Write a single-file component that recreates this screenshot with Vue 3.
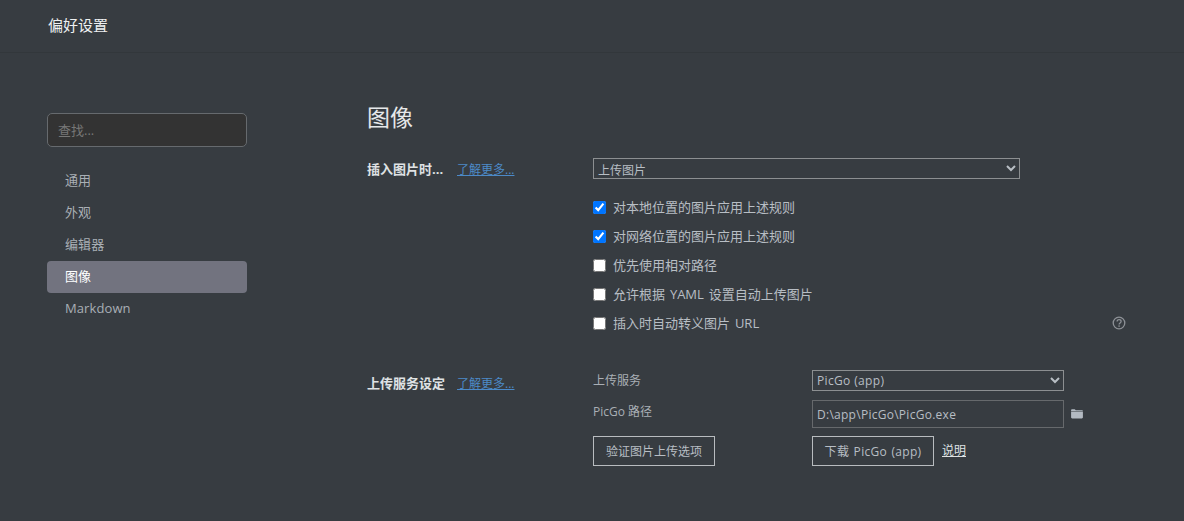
<script setup>
const navItems = [
  { label: '通用' },
  { label: '外观' },
  { label: '编辑器' },
  { label: '图像', active: true },
  { label: 'Markdown' },
]
const options = [
  { label: '对本地位置的图片应用上述规则', checked: true },
  { label: '对网络位置的图片应用上述规则', checked: true },
  { label: '优先使用相对路径', checked: false },
  { label: '允许根据 YAML 设置自动上传图片', checked: false },
  { label: '插入时自动转义图片 URL', checked: false, help: true },
]
</script>

<template>
  <div class="page">
    <header class="header">偏好设置</header>
    <div class="body">
      <aside class="sidebar">
        <input class="search" type="text" placeholder="查找..." />
        <nav class="nav">
          <div v-for="item in navItems" :key="item.label" class="nav-item" :class="{ active: item.active }">{{ item.label }}</div>
        </nav>
      </aside>
      <main class="main">
        <h1 class="title">图像</h1>
        <section class="section first">
          <div class="label-col">
            <span class="label">插入图片时...</span>
            <a class="more">了解更多...</a>
          </div>
          <div class="content">
            <select class="select wide"><option>上传图片</option></select>
            <div class="checks">
              <label v-for="o in options" :key="o.label" class="check">
                <input type="checkbox" :checked="o.checked" />
                <span class="check-text">{{ o.label }}</span>
                <svg v-if="o.help" class="help" viewBox="0 0 14 14" width="14" height="14">
                  <circle cx="7" cy="7" r="5.8" fill="none" stroke="#8d9196" stroke-width="1.3" />
                  <path d="M5.1 5.6c0-1.2.9-1.9 2-1.9s2 .7 2 1.7c0 1.5-2 1.5-2 3" fill="none" stroke="#8d9196" stroke-width="1.3" />
                  <rect x="6.4" y="9.4" width="1.4" height="1.4" fill="#8d9196" />
                </svg>
              </label>
            </div>
          </div>
        </section>
        <section class="section second">
          <div class="label-col">
            <span class="label">上传服务设定</span>
            <a class="more">了解更多...</a>
          </div>
          <div class="service">
            <div class="svc-label row-a">上传服务</div>
            <select class="select narrow"><option>PicGo (app)</option></select>
            <div class="svc-label row-b">PicGo 路径</div>
            <div class="path-row">
              <input class="path" type="text" value="D:\app\PicGo\PicGo.exe" />
              <svg class="folder" viewBox="0 0 13 11" width="12" height="10">
                <path d="M0 1.2C0 .6.4.2 1 .2h3l1.2 1.1h6.6c.7 0 1.2.3 1.2 1v.4H0z" fill="#b3bac2" />
                <path d="M0 3.4h13v5.8c0 .8-.5 1.3-1.2 1.3H1.2C.5 10.5 0 10 0 9.2z" fill="#b3bac2" />
              </svg>
            </div>
            <div><button class="btn first-btn">验证图片上传选项</button></div>
            <div class="btn-row">
              <button class="btn second-btn">下载 PicGo (app)</button>
              <a class="doc">说明</a>
            </div>
          </div>
        </section>
      </main>
    </div>
  </div>
</template>

<style>
html, body { margin: 0; background: #373c41; }
</style>

<style scoped>
.page {
  width: 1184px;
  height: 521px;
  overflow: hidden;
  background: #373c41;
  color: #b8bec4;
  font-family: "Open Sans", "Noto Sans CJK SC", sans-serif;
  font-size: 13px;
}
.header {
  box-sizing: border-box;
  height: 53px;
  padding: 14px 0 0 48px;
  border-bottom: 1px solid #32373b;
  color: #eef0f1;
  font-size: 15px;
  line-height: 22px;
}
.body { display: flex; }
.sidebar { width: 320px; padding: 60px 0 0 47px; box-sizing: border-box; flex: none; }
.search {
  display: block;
  box-sizing: border-box;
  width: 200px;
  height: 34px;
  padding: 0 10px;
  background: #333333;
  border: 1px solid #666a6e;
  border-radius: 5px;
  color: #ccc;
  font: inherit;
  outline: none;
}
.search::placeholder { color: #777; opacity: 1; }
.nav { width: 200px; margin-top: 18px; }
.nav-item { height: 32px; line-height: 30px; padding-left: 18px; border-radius: 4px; color: #a9afb5; letter-spacing: .1px; }
.nav-item.active { background: #72737f; color: #fff; }
.main { flex: 1; padding-left: 47px; }
.title {
  margin: 0;
  padding-top: 49px;
  font-size: 23px;
  line-height: 30px;
  font-weight: 400;
  color: #e6e8ea;
}
.section { display: flex; }
.first { margin-top: 26px; }
.second { margin-top: 32px; }
.label-col { width: 226px; flex: none; display: flex; gap: 12px; line-height: 22px; }
.second .label-col { padding-top: 2px; }
.label { min-width: 78px; font-weight: 700; color: #dfe2e4; }
.more { padding-top: 1px; color: #4c8ac8; text-decoration: underline; font-size: 12px; }
.content { width: 537px; }
.select {
  display: block;
  box-sizing: border-box;
  height: 21px;
  padding: 2px 0 0;
  background: transparent;
  border: 1px solid #8c8f91;
  border-radius: 0;
  color: #b8bec4;
  font: inherit;
  font-size: 12px;
  outline: none;
}
.select option { background: #373c41; }
.wide { width: 427px; }
.narrow { width: 252px; align-self: start; padding-top: 0; letter-spacing: .35px; }
.checks { margin-top: 14px; }
.check { display: flex; align-items: center; height: 29px; gap: 7px; word-spacing: 1.5px; }
.check input { width: 13px; height: 13px; margin: 0; flex: none; }
.check-text { margin-top: -2px; }
.help { margin-left: auto; margin-right: 4px; margin-top: -2px; }
.service {
  display: grid;
  grid-template-columns: 219px 1fr;
  grid-template-rows: 22px 28px 30px;
  row-gap: 8px;
  width: 540px;
  align-items: center;
}
.svc-label { color: #a9afb5; font-size: 12px; }
.row-a { padding-bottom: 2px; }
.row-b { padding-bottom: 6px; }
.path-row { display: flex; align-items: center; gap: 7px; }
.path {
  box-sizing: border-box;
  width: 252px;
  height: 28px;
  padding: 0 4px;
  background: transparent;
  border: 1px solid #66696c;
  color: #b8bec4;
  font: inherit;
  font-size: 12px;
  letter-spacing: .27px;
  outline: none;
}
.btn {
  box-sizing: border-box;
  display: block;
  height: 30px;
  padding: 0;
  background: transparent;
  border: 1px solid #b8bcbf;
  color: #b8bec4;
  font: inherit;
  font-size: 12px;
}
.first-btn { width: 122px; }
.second-btn { width: 122px; letter-spacing: .3px; word-spacing: 1px; }
.btn-row { display: flex; align-items: center; gap: 8px; }
.doc { padding-bottom: 2px; color: #dfe2e4; text-decoration: underline; font-size: 12px; }
</style>
